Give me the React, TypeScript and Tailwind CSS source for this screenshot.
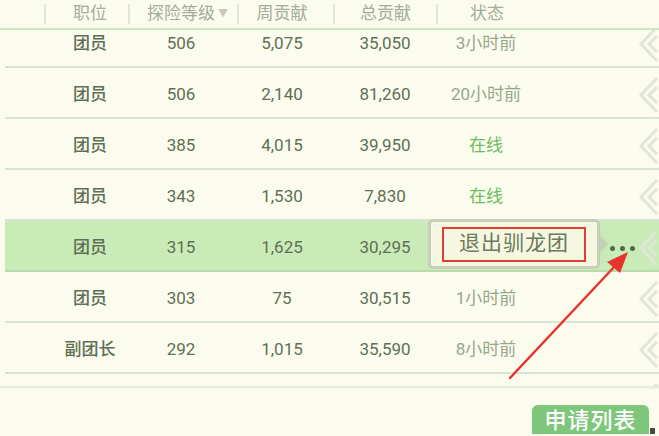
import React from 'react';

type Member = {
  role: string;
  level: number;
  weekly: string;
  total: string;
  status: string;
  online?: boolean;
  selected?: boolean;
};

const members: Member[] = [
  { role: '团员', level: 506, weekly: '5,075', total: '35,050', status: '3小时前' },
  { role: '团员', level: 506, weekly: '2,140', total: '81,260', status: '20小时前' },
  { role: '团员', level: 385, weekly: '4,015', total: '39,950', status: '在线', online: true },
  { role: '团员', level: 343, weekly: '1,530', total: '7,830', status: '在线', online: true },
  { role: '团员', level: 315, weekly: '1,625', total: '30,295', status: '', selected: true },
  { role: '团员', level: 303, weekly: '75', total: '30,515', status: '1小时前' },
  { role: '副团长', level: 292, weekly: '1,015', total: '35,590', status: '8小时前' },
  { role: '', level: 0, weekly: '', total: '', status: '' },
];

const rowCols = 'grid grid-cols-[39px_92px_90px_112px_94px_108px_65px_35px_1fr]';

function HeaderCell({ label, className, sort }: { label: string; className?: string; sort?: boolean }) {
  return (
    <div className="flex items-center h-full">
      <span className="w-[2px] h-[20px] bg-[#e0e6d8]" />
      <div className={`flex-1 flex items-center justify-center ${className ?? ''}`}>
        <span>{label}</span>
        {sort && <span className="ml-[3px] text-[10px] text-[#c3c9bb] leading-none">▼</span>}
      </div>
    </div>
  );
}

function Chevrons() {
  // decorative border strip down the right edge of the list
  const centers = [14, 65, 116, 167, 218, 269, 320, 371];
  return (
    <svg className="absolute right-0 top-0 pointer-events-none" width="22" height="357" viewBox="0 0 22 357">
      {centers.map((c) => (
        <g key={c} fill="none" stroke="#e2e5d8" strokeWidth="3" strokeLinejoin="miter">
          <polyline points={`20,${c - 17} 4,${c} 20,${c + 17}`} />
          <polyline points={`20,${c - 8} 12,${c} 20,${c + 8}`} />
        </g>
      ))}
    </svg>
  );
}

function QuitPopup() {
  return (
    <div className="absolute left-[423px] top-[-2px] flex items-center">
      <div className="w-[172px] h-[50px] rounded-[5px] border-[3px] border-[#c6cfb7] bg-[#f5f7e1] flex items-center justify-center">
        <div className="w-[144px] h-[35px] border-2 border-[#e23d36] flex items-center justify-center text-[21px] text-[#6c7a5d] tracking-[1px]">
          退出驯龙团
        </div>
      </div>
      <div className="w-0 h-0 border-y-[9px] border-y-transparent border-l-[8px] border-l-[#c6cfb7]" />
    </div>
  );
}

function MoreDots() {
  return (
    <div className="flex items-center justify-center gap-[5px]">
      <span className="w-[5px] h-[5px] rounded-full bg-[#4e6a46]" />
      <span className="w-[5px] h-[5px] rounded-full bg-[#4e6a46]" />
      <span className="w-[5px] h-[5px] rounded-full bg-[#4e6a46]" />
    </div>
  );
}

export default function App() {
  return (
    <div className="relative w-[659px] h-[436px] overflow-hidden bg-[#fbfcee] font-[Roboto,'Noto_Sans_CJK_SC',sans-serif]">
      {/* column headers */}
      <div className="h-[30px] pl-[5px] border-b-2 border-[#cfe8c3] text-[17px] text-[#a3ad98]">
        <div className="grid grid-cols-[39px_84px_109px_96px_103px_100px_1fr] h-full">
          <div />
          <HeaderCell label="职位" className="pl-[6px]" />
          <HeaderCell label="探险等级" className="pl-[8px]" sort />
          <HeaderCell label="周贡献" className="pr-[8px]" />
          <HeaderCell label="总贡献" />
          <HeaderCell label="状态" />
          <div />
        </div>
      </div>

      {/* member list */}
      <div className="relative h-[357px] overflow-hidden border-b border-[#e4e9da] shadow-[0_1px_2px_rgba(180,190,170,0.35)]">
        <div className="-mt-[13px] pl-[5px]">
          {members.map((m, i) => (
            <div
              key={i}
              className={`relative h-[51px] pt-[5px] ${rowCols} items-center text-[17px] text-[#5f6f55] border-b-2 ${
                m.selected ? 'bg-[#c9ebb8] border-[#b9d8ab]' : 'border-[#d9e3d6]'
              }`}
            >
              <div />
              <div className="text-center font-medium">{m.role}</div>
              <div className="text-center">{m.level || ''}</div>
              <div className="text-center">{m.weekly}</div>
              <div className="text-center">{m.total}</div>
              <div className={`text-center ${m.online ? 'text-[#6cbd5d]' : 'text-[#97a68b]'}`}>{m.status}</div>
              <div />
              <div>{m.selected && <MoreDots />}</div>
              <div />
              {m.selected && <QuitPopup />}
            </div>
          ))}
        </div>
        <Chevrons />
      </div>

      {/* footer */}
      <div className="flex justify-end items-end h-[47px] pr-[4px]">
        <button className="h-[29px] w-[117px] rounded-t-[6px] bg-[#7dc67a] text-white text-[22px] font-medium leading-none pt-[3px] tracking-[1px]">
          申请列表
        </button>
        <span className="ml-[1px] w-[5px] h-[6px] bg-[#4a4a44]" />
      </div>

      {/* annotation arrow */}
      <svg className="absolute inset-0 pointer-events-none" width="659" height="436" viewBox="0 0 659 436">
        <line x1="510" y1="378" x2="615" y2="266" stroke="#e8322d" strokeWidth="2.5" strokeLinecap="round" />
        <polygon points="628,252 607,262 620,273" fill="#e8322d" />
      </svg>
    </div>
  );
}
